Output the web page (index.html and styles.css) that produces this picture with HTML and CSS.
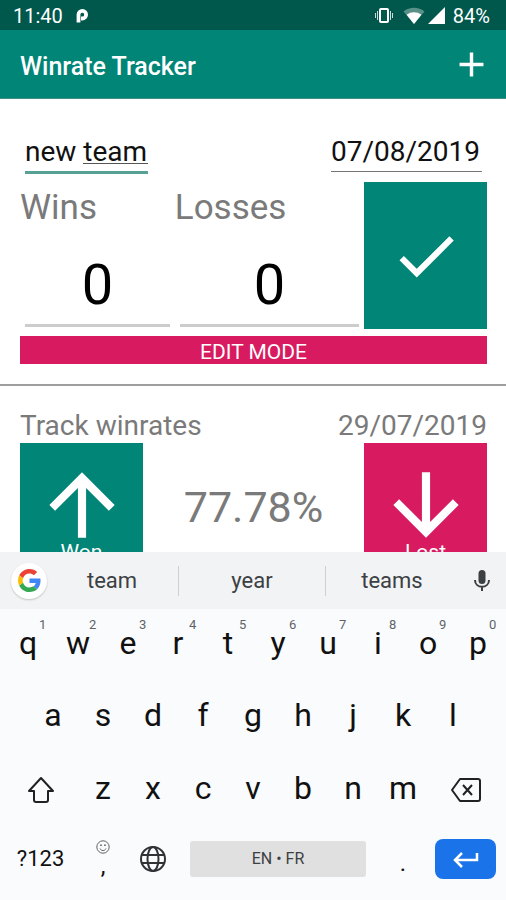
FILE: index.html
```html
<!DOCTYPE html>
<html lang="en">
<head>
<meta charset="utf-8">
<meta name="viewport" content="width=device-width, initial-scale=1">
<title>Winrate Tracker</title>
<link rel="stylesheet" href="styles.css">
</head>
<body>
<div class="status">
  <span>11:40</span>
  <svg class="status-p" width="14" height="16" viewBox="0 0 14 16"><path d="M3.500 14.500V6.500a3.800 3.800 0 1 1 3.800 4H6" fill="none" stroke="#fff" stroke-width="3.800"/></svg>
  <div class="status-icons">
    <svg width="18" height="18" viewBox="0 0 18 18" fill="none" stroke="#fff"><rect x="5" y="2" width="8" height="13" rx="1" stroke-width="2"/><path d="M2.500 4v9M15.500 4v9M.500 6v5M17.500 6v5" stroke-width="1" opacity=".8"/></svg>
    <svg width="22" height="18" viewBox="0 0 22 18"><path d="M11 17L.500 4.500C6.500-.500 15.500-.500 21.500 4.500z" fill="#fff" opacity=".35"/><path d="M11 17L3.600 7.800c4.400-3.300 10.400-3.300 14.800 0z" fill="#fff"/></svg>
    <svg width="18" height="18" viewBox="0 0 18 18"><path d="M17 0v17H0z" fill="#fff"/></svg>
    <span>84%</span>
  </div>
</div>
<header class="appbar">
  <h1>Winrate Tracker</h1>
  <button class="add" aria-label="Add team"><svg width="41" height="41" viewBox="0 0 24 24"><path d="M19 13h-6v6h-2v-6H5v-2h6V5h2v6h6z" fill="#fff"/></svg></button>
</header>
<main>
  <section class="team editing">
    <div class="heading">
      <div class="name-field">
        <input class="field name" aria-label="Team name" value="new team" spellcheck="false">
        <span class="composing"></span>
      </div>
      <input class="field date" aria-label="Date" value="07/08/2019">
    </div>
    <div class="scores">
      <div class="score"><label for="wins">Wins</label><input id="wins" value="0"></div>
      <div class="score"><label for="losses">Losses</label><input id="losses" value="0"></div>
      <button class="tile save" aria-label="Save"><svg width="74" height="74" viewBox="0 0 24 24"><path d="M9 16.170L4.830 12l-1.420 1.410L9 19 21 7l-1.410-1.410z" fill="#fff"/></svg></button>
    </div>
    <button class="edit-mode">EDIT MODE</button>
  </section>
  <section class="team">
    <div class="heading muted"><span>Track winrates</span><span>29/07/2019</span></div>
    <div class="tracker">
      <button class="tile result"><svg width="98" height="98" viewBox="0 0 24 24"><path d="M4 12l1.410 1.410L11 7.830V20h2V7.830l5.580 5.590L20 12l-8-8z" fill="#fff"/></svg><span>Won</span></button>
      <p class="rate">77.78%</p>
      <button class="tile result lost"><svg width="98" height="98" viewBox="0 0 24 24"><path d="M20 12l-1.410-1.410L13 16.170V4h-2v12.170l-5.580-5.590L4 12l8 8z" fill="#fff"/></svg><span>Lost</span></button>
    </div>
  </section>
</main>
<div class="keyboard">
  <div class="suggestions">
    <button class="google" aria-label="Google"><svg width="23" height="23" viewBox="0 0 48 48"><path fill="#EA4335" d="M24 9.500c3.540 0 6.710 1.220 9.210 3.600l6.850-6.850C35.900 2.380 30.470 0 24 0 14.620 0 6.510 5.380 2.560 13.220l7.980 6.190C12.430 13.720 17.740 9.500 24 9.500z"/><path fill="#4285F4" d="M46.980 24.550c0-1.570-.15-3.090-.38-4.550H24v9.020h12.940c-.58 2.960-2.260 5.480-4.780 7.180l7.730 6c4.510-4.180 7.090-10.360 7.090-17.650z"/><path fill="#FBBC05" d="M10.530 28.590c-.48-1.450-.76-2.990-.76-4.590s.27-3.140.76-4.590l-7.980-6.190C.92 16.460 0 20.120 0 24s.92 7.540 2.560 10.780z"/><path fill="#34A853" d="M24 48c6.480 0 11.930-2.130 15.890-5.810l-7.730-6c-2.150 1.450-4.920 2.300-8.160 2.300-6.260 0-11.570-4.220-13.470-9.910l-7.980 6.190C6.510 42.620 14.620 48 24 48z"/></svg></button>
    <button>team</button>
    <button class="middle">year</button>
    <button>teams</button>
    <button class="mic" aria-label="Voice input"><svg width="18" height="24" viewBox="0 0 18 24"><rect x="5.500" y="1" width="7" height="14" rx="3.500" fill="#3c4043"/><path d="M2 11c0 9 14 9 14 0M9 18v4" fill="none" stroke="#3c4043" stroke-width="2"/></svg></button>
  </div>
  <div class="keys">
    <button>q<sup>1</sup></button><button>w<sup>2</sup></button><button>e<sup>3</sup></button><button>r<sup>4</sup></button><button>t<sup>5</sup></button><button>y<sup>6</sup></button><button>u<sup>7</sup></button><button>i<sup>8</sup></button><button>o<sup>9</sup></button><button>p<sup>0</sup></button>
    <button class="indent">a</button><button>s</button><button>d</button><button>f</button><button>g</button><button>h</button><button>j</button><button>k</button><button>l</button>
    <button class="wide first icon" aria-label="Shift"><svg width="30" height="30" viewBox="0 0 30 30"><path d="M15 3L3 16h5v9q0 2 2 2h10q2 0 2-2v-9h5z" fill="none" stroke="#202124" stroke-width="2" stroke-linejoin="round"/></svg></button><button>z</button><button>x</button><button>c</button><button>v</button><button>b</button><button>n</button><button>m</button><button class="wide icon" aria-label="Backspace"><svg width="32" height="26" viewBox="0 0 32 26"><path d="M10 2h18q2 0 2 2v18q0 2-2 2H10L2 13zM13 8l9 10M22 8l-9 10" fill="none" stroke="#202124" stroke-width="2" stroke-linejoin="round"/></svg></button>
    <button class="wide symbols">?123</button>
    <button class="comma" aria-label="Comma or emoji"><svg width="14" height="14" viewBox="0 0 14 14"><circle cx="7" cy="7" r="6.200" fill="none" stroke="#5f6368"/><path d="M4 8.500c1 2.700 5 2.700 6 0" fill="none" stroke="#5f6368"/><circle cx="5" cy="5.200" r=".9" fill="#5f6368"/><circle cx="9" cy="5.200" r=".9" fill="#5f6368"/></svg><span>,</span></button>
    <button aria-label="Change language"><svg width="28" height="28" viewBox="0 0 28 28" fill="none" stroke="#303236" stroke-width="2"><circle cx="14" cy="14" r="12"/><ellipse cx="14" cy="14" rx="5.500" ry="12"/><path d="M3 10h22M3 18h22"/></svg></button>
    <button class="space">EN • FR</button>
    <button class="period">.</button>
    <button class="enter" aria-label="Enter"><svg width="26" height="18" viewBox="0 0 26 18"><path d="M24 3v7H3M9 3L2 10l7 7" fill="none" stroke="#fff" stroke-width="2.500"/></svg></button>
  </div>
</div>
</body>
</html>
```
FILE: styles.css
```css
* { box-sizing: border-box; }

body {
  margin: 0;
  height: 100vh;
  display: flex;
  flex-direction: column;
  background: #fff;
  color: #111;
  font-family: Roboto, "Liberation Sans", sans-serif;
}

button, input {
  margin: 0;
  padding: 0;
  border: 0;
  border-radius: 0;
  background: none;
  color: inherit;
  font: inherit;
  outline: 0;
}

svg { display: block; }

/* Status bar */
.status {
  display: flex;
  flex: none;
  align-items: center;
  height: 30px;
  padding: 2px 16px 0 13px;
  background: #00574b;
  color: #fff;
  font-size: 20px;
}
.status-p { margin-left: 12px; }
.status-icons {
  display: flex;
  align-items: center;
  gap: 7px;
  margin-left: auto;
}
.status-icons svg:nth-child(2) { margin-left: 3px; margin-right: -4px; }

/* App bar */
.appbar {
  display: flex;
  flex: none;
  align-items: center;
  justify-content: space-between;
  height: 69px;
  padding: 0 14px 0 20px;
  border-bottom: 1px solid #3f8f85;
  background: #008577;
  color: #fff;
}
.appbar h1 {
  margin: 0;
  padding-top: 4px;
  font-size: 25px;
  font-weight: 500;
}

/* Teams */
main {
  flex: 1 1 0;
  min-height: 0;
  overflow: hidden;
}
.team { padding: 23px 19px 20px 20px; }
.editing {
  padding-top: 35px;
  border-bottom: 2px solid #9e9e9e;
}
.heading {
  display: flex;
  align-items: flex-start;
  justify-content: space-between;
  font-size: 28px;
  line-height: 34px;
}
.editing .heading { padding: 0 5px; }
.muted { color: #7a7a7a; }
.name-field { position: relative; }
.field {
  display: block;
  height: 40px;
  padding-bottom: 3px;
  line-height: 34px;
}
.name { width: 123px; border-bottom: 3px solid #57a094; }
.date { width: 151px; height: 38px; border-bottom: 1px solid #757575; }
.composing {
  position: absolute;
  right: 0;
  bottom: 10px;
  width: 65px;
  height: 1px;
  background: #555;
}

.scores {
  display: grid;
  grid-template-columns: 9fr 11fr 123px;
  height: 147px;
  margin-top: 8px;
}
.score {
  display: flex;
  flex-direction: column;
  justify-content: space-between;
  min-width: 0;
  padding: 5px 0 2px;
}
.score label {
  color: #7a7a7a;
  font-size: 35px;
  line-height: 42px;
}
.score input {
  width: auto;
  min-width: 0;
  height: 75px;
  margin: 0 5px;
  padding-bottom: 6px;
  border-bottom: 3px solid #ccc;
  color: #000;
  font-size: 56px;
  line-height: 66px;
  text-align: center;
}

.tile {
  display: flex;
  align-items: center;
  justify-content: center;
  background: #008577;
  color: #fff;
}
.edit-mode {
  display: block;
  width: 100%;
  height: 28px;
  margin-top: 7px;
  padding-top: 5px;
  background: #d81b60;
  color: #fff;
  font-size: 21px;
  line-height: 23px;
}

.tracker {
  display: grid;
  grid-template-columns: 123px 1fr 123px;
}
.result {
  flex-direction: column;
  justify-content: flex-start;
  height: 147px;
  padding-top: 13px;
  font-size: 21px;
  line-height: 24px;
}
.result span { margin-top: -14px; }
.lost { background: #d81b60; }
.rate {
  margin: 0;
  padding-top: 39px;
  color: #7a7a7a;
  font-size: 43px;
  line-height: 50px;
  text-align: center;
}

/* Keyboard */
.keyboard {
  flex: none;
  background: #fafbfd;
}
.suggestions {
  display: grid;
  grid-template-columns: 46px 33fr 37fr 33fr 48px;
  align-items: center;
  height: 57px;
  background: #f1f3f4;
  color: #3c4043;
  font-size: 22px;
}
.suggestions .middle {
  height: 30px;
  border: solid #cdd0d3;
  border-width: 0 1px;
}
.google {
  display: grid;
  place-items: center;
  width: 36px;
  height: 36px;
  margin-left: 11px;
  border-radius: 50%;
  background: #fff;
  box-shadow: 0 1px 2px #0003;
}
.mic { justify-self: center; }

.keys {
  display: grid;
  grid-template-columns: repeat(20, 1fr);
  grid-template-rows: 68px 76px 70px 72px;
  padding: 0 3px 5px;
  color: #111;
  font-size: 32px;
  line-height: 38px;
}
.keys button {
  position: relative;
  display: flex;
  align-items: center;
  justify-content: center;
  grid-column: span 2;
}
.keys sup {
  position: absolute;
  top: 8px;
  left: 36px;
  color: #5f6368;
  font-size: 13px;
  line-height: 16px;
}
.keys .indent { grid-column: 2 / span 2; }
.keys .wide { grid-column: span 3; }
.keys .icon { padding-top: 4px; }
.keys .first { grid-column: 1 / span 3; }
.keys .symbols { grid-column: 1 / span 3; font-size: 22px; }
.keys .comma {
  flex-direction: column;
  font-size: 24px;
  line-height: 24px;
}
.keys .period { padding-top: 8px; font-size: 24px; }
.keys .space {
  grid-column: span 8;
  align-self: center;
  height: 36px;
  margin: 0 12px;
  border-radius: 3px;
  background: #e0e0e0;
  color: #3c4043;
  font-size: 16px;
}
.keys .enter {
  grid-column: span 3;
  align-self: center;
  height: 40px;
  margin: 0 7px;
  border-radius: 8px;
  background: #1a73e8;
}
```
